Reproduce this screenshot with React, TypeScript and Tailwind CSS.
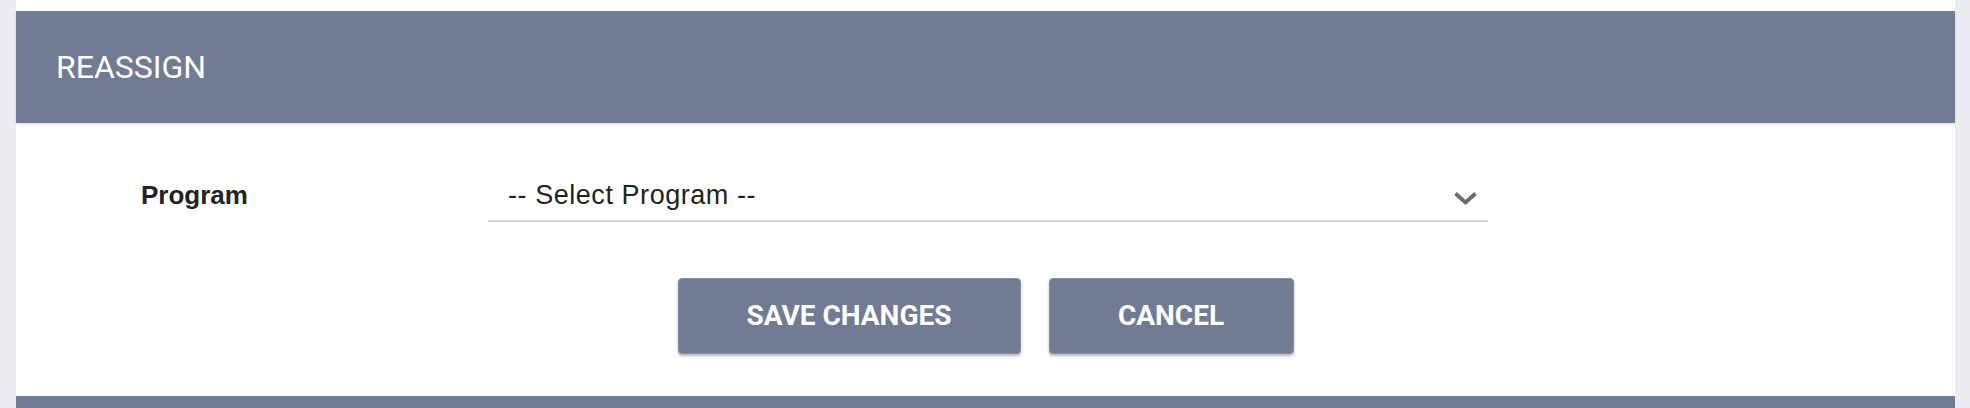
import React from "react";

const Chevron: React.FC = () => (
  <svg width="25" height="15" viewBox="0 0 25 15" className="shrink-0">
    <polyline points="2.5,2.5 12.5,11.5 22.5,2.5" fill="none" stroke="#6a6a6a" strokeWidth="3.8" strokeLinecap="butt" />
  </svg>
);

const ActionButton: React.FC<{ label: string; width: string }> = ({ label, width }) => (
  <button
    className={`${width} h-[76px] rounded-[4px] bg-[#717b93] border border-[#858ea4] shadow-[0_2px_3px_rgba(0,0,0,0.28)] text-white font-bold text-[28px] font-['Roboto',sans-serif]`}
  >
    {label}
  </button>
);

export default function App() {
  return (
    <div className="w-[1970px] h-[408px] overflow-hidden bg-[#ecedf2] pl-[16px] pr-[15px]">
      <div className="bg-white pt-[11px]">
        <div className="h-[112px] bg-[#717b93] flex items-center pl-[40px] shadow-[0_2px_3px_rgba(0,0,0,0.12)] relative">
          <h2 className="text-white text-[32px] font-['Roboto',sans-serif] font-normal">REASSIGN</h2>
        </div>

        <div className="pt-[47px] pb-[42px]">
          <div className="flex items-center pl-[125px]">
            <label className="w-[347px] text-[26px] font-bold text-[#222] font-['Liberation_Sans',Arial,sans-serif] pb-[2px]">
              Program
            </label>
            <div className="w-[1000px] h-[52px] border-b-2 border-[#d4d4d8] flex items-center justify-between pl-[20px] pr-[10px]">
              <span className="text-[27px] text-[#222] font-['Liberation_Sans',Arial,sans-serif] tracking-[0.55px]">
                -- Select Program --
              </span>
              <div className="pt-[6px]">
                <Chevron />
              </div>
            </div>
          </div>

          <div className="flex justify-center gap-[28px] mt-[56px]">
            <ActionButton label="SAVE CHANGES" width="w-[343px]" />
            <ActionButton label="CANCEL" width="w-[245px]" />
          </div>
        </div>

        <div className="h-[40px] bg-[#717b93]" />
      </div>
    </div>
  );
}
